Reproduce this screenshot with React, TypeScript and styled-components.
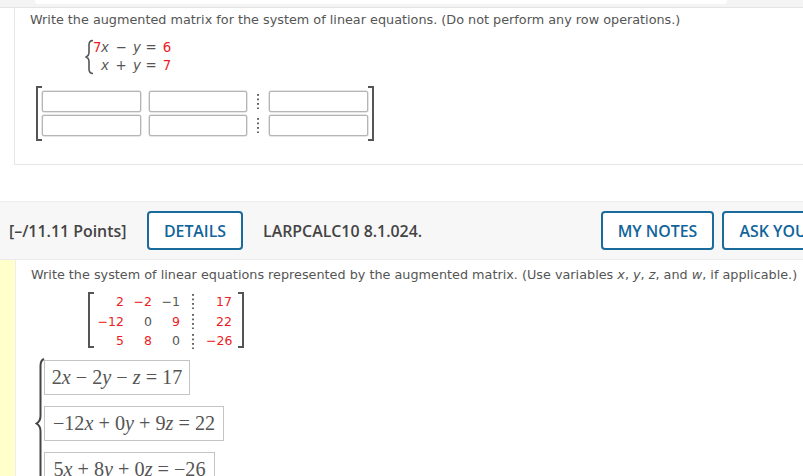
import React from "react";
import styled, { createGlobalStyle } from "styled-components";

const GlobalStyle = createGlobalStyle`
  html, body {
    margin: 0;
    padding: 0;
    width: 803px;
    height: 476px;
    overflow: hidden;
    background: #fff;
  }
`;

const Page = styled.div`
  width: 803px;
  height: 476px;
  overflow: hidden;
  font-family: "DejaVu Sans", Verdana, sans-serif;
  color: #555;
`;

const TopStrip = styled.div`
  height: 8px;
  background: #f4f4f4;
  border-bottom: 1px solid #e4e4e4;
  padding-left: 35px;
  box-sizing: border-box;
`;

const TopTab = styled.div`
  width: 692px;
  height: 4px;
  background: #fff;
  border-radius: 0 0 3px 3px;
`;

const FirstPanel = styled.section`
  margin-left: 14px;
  height: 157px;
  box-sizing: border-box;
  border-left: 1px solid #e6e6e6;
  border-bottom: 1px solid #e6e6e6;
  padding: 4px 0 0 15px;
`;

const Prompt = styled.p`
  margin: 0;
  font-size: 12.8px;
  line-height: 16px;
  white-space: nowrap;
  color: #555;
  em {
    font-style: oblique;
  }
`;

const SystemRow = styled.div`
  display: flex;
  align-items: center;
  margin: 11px 0 0 53px;
  height: 36px;
`;

const EquationGrid = styled.div`
  display: grid;
  grid-template-columns: 8px 8px 24px 8px 20px 12px;
  grid-auto-rows: 18px;
  font-size: 13.35px;
  line-height: 18px;
  text-align: center;
  margin-left: -2px;
`;

const Term = styled.span<{ $red?: boolean; $italic?: boolean }>`
  color: ${({ $red }) => ($red ? "#ec1c24" : "#555")};
  font-style: ${({ $italic }) => ($italic ? "oblique" : "normal")};
`;

const EmptyMatrix = styled.div`
  display: grid;
  grid-template-columns: 99px 98px 6px 99px;
  grid-template-rows: 21px 21px;
  column-gap: 8px;
  row-gap: 3px;
  position: relative;
  width: max-content;
  margin: 16px 0 0 12px;
`;

const Bracket = styled.div<{ $side: "left" | "right"; $top: number; $bottom: number }>`
  position: absolute;
  top: ${({ $top }) => $top}px;
  bottom: ${({ $bottom }) => $bottom}px;
  ${({ $side }) => $side}: -6px;
  width: 4px;
  border: 2px solid #555;
  border-${({ $side }) => ($side === "left" ? "right" : "left")}: none;
`;

const AnswerBox = styled.div`
  box-sizing: border-box;
  border: 1px solid #b5b5b5;
  border-radius: 2px;
  background: #fff;
  box-shadow: 0 0 0 0.5px #ccc;
`;

const VDots = styled.div`
  justify-self: center;
  align-self: center;
  width: 2px;
  height: 15px;
  background-image: radial-gradient(circle at 1px 1px, #666 0.8px, transparent 1px);
  background-size: 2px 4.5px;
`;

const QuestionHeader = styled.header`
  margin-top: 36px;
  height: 59px;
  box-sizing: border-box;
  background: #f7f7f7;
  border-top: 1px solid #ececec;
  border-bottom: 1px solid #ececec;
  display: flex;
  align-items: center;
  padding-left: 9px;
  font-family: "Open Sans", sans-serif;
  font-weight: 600;
  font-size: 15.9px;
  color: #444;
  white-space: nowrap;
`;

const Points = styled.span`
  width: 138px;
  flex: none;
`;

const OutlineButton = styled.button<{ $w: number }>`
  flex: none;
  width: ${({ $w }) => $w}px;
  height: 39px;
  box-sizing: border-box;
  border: 2px solid #1a6b9c;
  border-radius: 4px;
  background: #fff;
  color: #11659b;
  font: inherit;
  padding: 0;
`;

const QuestionCode = styled.span`
  flex: none;
  width: 338px;
  margin-left: 20px;
`;

const NotesButton = styled(OutlineButton)`
  margin-right: 8px;
`;

const QuestionBody = styled.section`
  background: #ffc;
  padding-left: 15px;
`;

const BodyInner = styled.div`
  background: #fff;
  height: 217px;
  padding: 7px 0 0 15px;
  border-left: 1px solid #eee;
`;

const ValueMatrix = styled.div`
  position: relative;
  display: grid;
  grid-template-columns: 30px 28px 28px 26px 26px;
  grid-auto-rows: 19.7px;
  width: max-content;
  padding-right: 6px;
  margin: 9px 0 0 63px;
  font-size: 12.5px;
  line-height: 19.7px;
  text-align: right;
`;

const AnswerSystem = styled.div`
  position: relative;
  margin: 9px 0 0 13px;
  display: flex;
  flex-direction: column;
  align-items: flex-start;
  gap: 11px;
`;

const MathBox = styled.div<{ $w: number }>`
  box-sizing: border-box;
  width: ${({ $w }) => $w}px;
  height: 35px;
  border: 1px solid #c4c4c4;
  text-align: center;
  font-family: "Liberation Serif", "Times New Roman", serif;
  font-size: 20.2px;
  line-height: 33px;
  color: #555;
  white-space: nowrap;
  i {
    font-style: italic;
  }
`;

const BraceSvg = styled.svg`
  position: absolute;
  left: -9px;
  top: -2px;
`;

const SmallBrace = () => (
  <svg width="12" height="36" viewBox="0 0 12 36" fill="none" stroke="#555" strokeWidth="1.6">
    <path d="M10 1.5 C7 1.5 6 3 6 6 V13 C6 16 5 17.5 2.5 18 C5 18.5 6 20 6 23 V30 C6 33 7 34.5 10 34.5" />
  </svg>
);

const matrixRows = [
  [
    { v: "2", red: true },
    { v: "−2", red: true },
    { v: "−1", red: false },
    { v: "17", red: true },
  ],
  [
    { v: "−12", red: true },
    { v: "0", red: false },
    { v: "9", red: true },
    { v: "22", red: true },
  ],
  [
    { v: "5", red: true },
    { v: "8", red: true },
    { v: "0", red: false },
    { v: "−26", red: true },
  ],
];

export default function App() {
  return (
    <Page>
      <GlobalStyle />
      <TopStrip>
        <TopTab />
      </TopStrip>

      <FirstPanel>
        <Prompt>Write the augmented matrix for the system of linear equations. (Do not perform any row operations.)</Prompt>
        <SystemRow>
          <SmallBrace />
          <EquationGrid>
            <Term $red>7</Term>
            <Term $italic>x</Term>
            <Term>−</Term>
            <Term $italic>y</Term>
            <Term>=</Term>
            <Term $red>6</Term>
            <span />
            <Term $italic>x</Term>
            <Term>+</Term>
            <Term $italic>y</Term>
            <Term>=</Term>
            <Term $red>7</Term>
          </EquationGrid>
        </SystemRow>
        <EmptyMatrix>
          <Bracket $side="left" $top={-5} $bottom={-5} />
          <AnswerBox />
          <AnswerBox />
          <VDots />
          <AnswerBox />
          <AnswerBox />
          <AnswerBox />
          <VDots />
          <AnswerBox />
          <Bracket $side="right" $top={-5} $bottom={-5} />
        </EmptyMatrix>
      </FirstPanel>

      <QuestionHeader>
        <Points>[–/11.11 Points]</Points>
        <OutlineButton $w={96}>DETAILS</OutlineButton>
        <QuestionCode>LARPCALC10 8.1.024.</QuestionCode>
        <NotesButton $w={113}>MY NOTES</NotesButton>
        <OutlineButton $w={186}>ASK YOUR TEACHER</OutlineButton>
      </QuestionHeader>

      <QuestionBody>
        <BodyInner>
          <Prompt>
            Write the system of linear equations represented by the augmented matrix. (Use variables <em>x</em>, <em>y</em>, <em>z</em>, and <em>w</em>, if applicable.)
          </Prompt>
          <ValueMatrix>
            <Bracket $side="left" $top={0} $bottom={3} />
            {matrixRows.map((row, i) => (
              <React.Fragment key={i}>
                <Term $red={row[0].red}>{row[0].v}</Term>
                <Term $red={row[1].red}>{row[1].v}</Term>
                <Term $red={row[2].red}>{row[2].v}</Term>
                <VDots />
                <Term $red={row[3].red}>{row[3].v}</Term>
              </React.Fragment>
            ))}
            <Bracket $side="right" $top={0} $bottom={3} />
          </ValueMatrix>
          <AnswerSystem>
            <BraceSvg width="10" height="150" viewBox="0 0 10 150" fill="none" stroke="#444" strokeWidth="2">
              <path d="M9 1 C6.5 2 5.5 4 5.5 8 V58 C5.5 62 4 64 1.5 65.5 C4 67 5.5 69 5.5 73 V150" />
            </BraceSvg>
            <MathBox $w={146}>
              2<i>x</i> − 2<i>y</i> − <i>z</i> = 17
            </MathBox>
            <MathBox $w={180}>
              −12<i>x</i> + 0<i>y</i> + 9<i>z</i> = 22
            </MathBox>
            <MathBox $w={171}>
              5<i>x</i> + 8<i>y</i> + 0<i>z</i> = −26
            </MathBox>
          </AnswerSystem>
        </BodyInner>
      </QuestionBody>
    </Page>
  );
}
